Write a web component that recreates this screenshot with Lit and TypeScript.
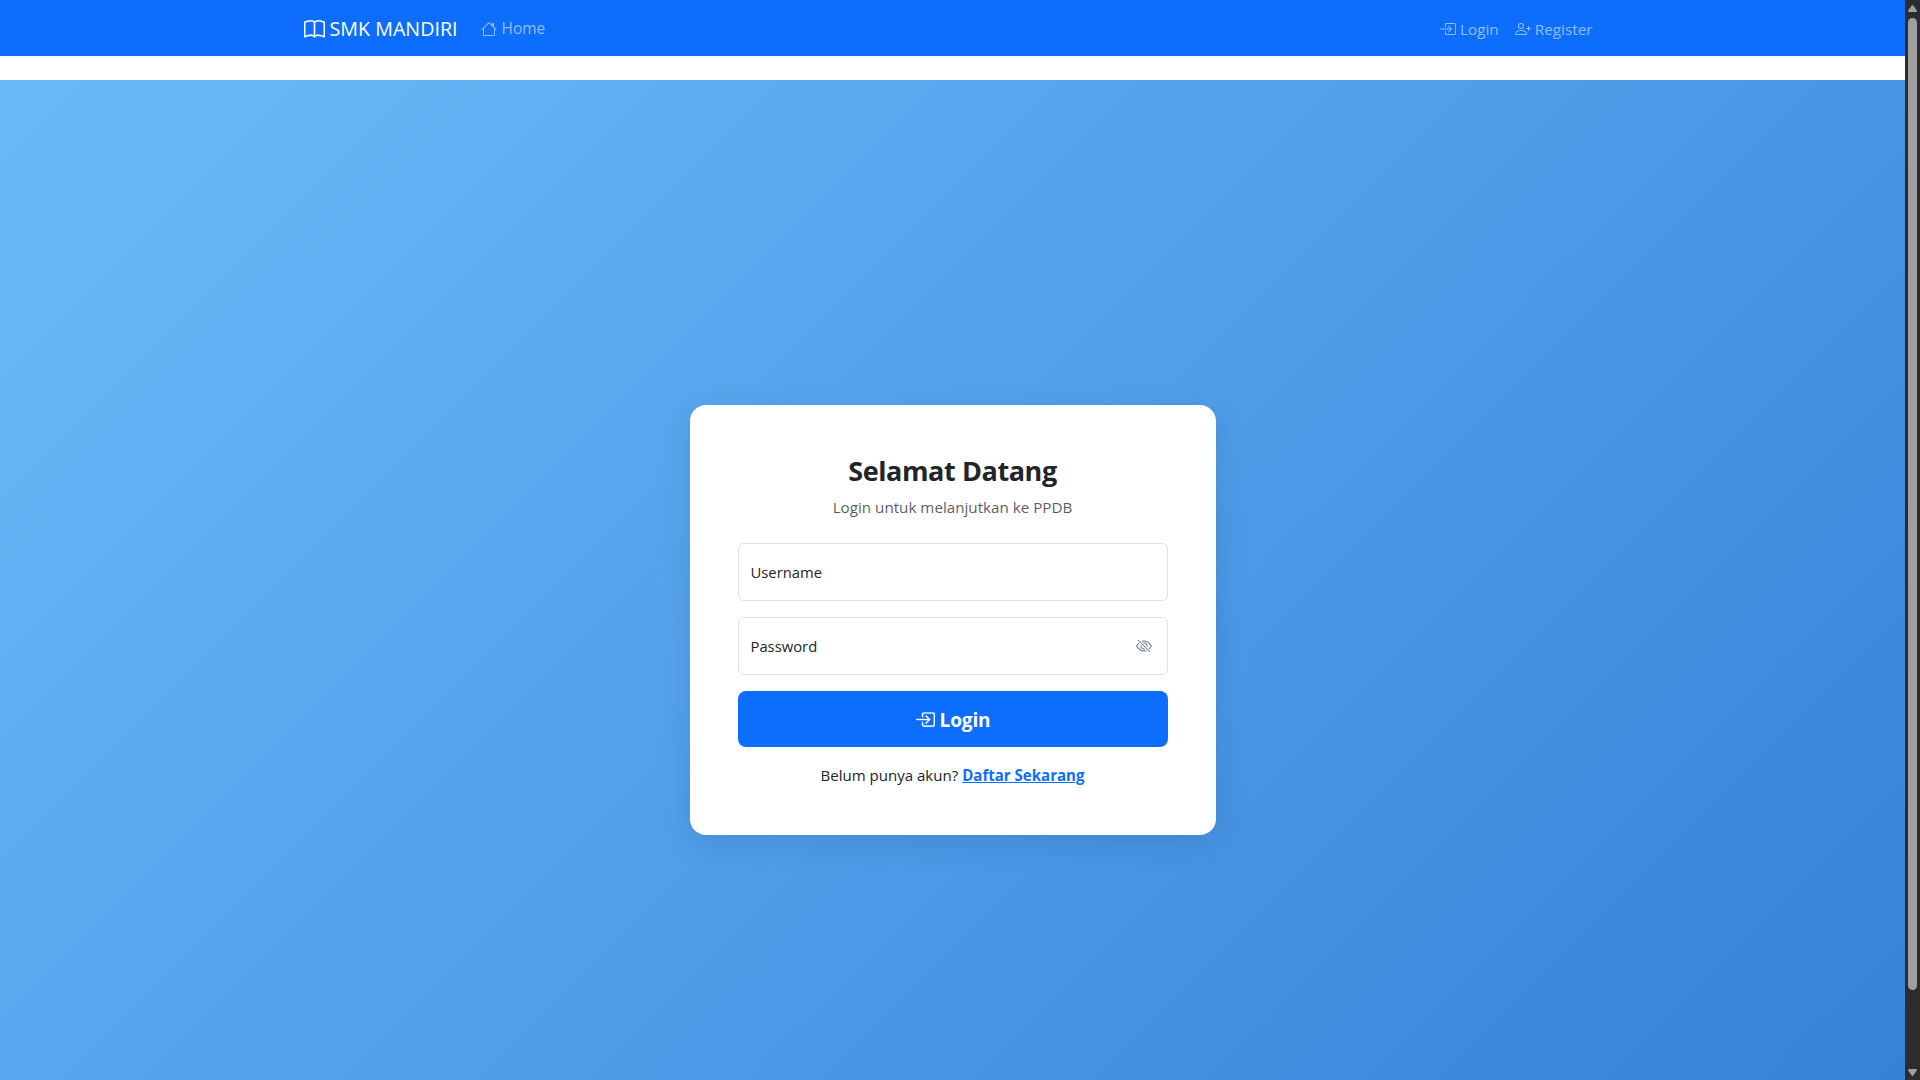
import { LitElement, html, css, svg } from "lit";
import { customElement } from "lit/decorators.js";

const paths = {
  book: svg`<path d="M1 2.828c.885-.37 2.154-.769 3.388-.893 1.33-.134 2.458.063 3.112.752v9.746c-.935-.53-2.12-.603-3.213-.493-1.18.12-2.37.461-3.287.811V2.828zm7.5-.141c.654-.689 1.782-.886 3.112-.752 1.234.124 2.503.523 3.388.893v9.923c-.918-.35-2.107-.692-3.287-.81-1.094-.111-2.278-.039-3.213.492V2.687zM8 1.783C7.015.936 5.587.81 4.287.94c-1.514.153-3.042.672-3.994 1.105A.5.5 0 0 0 0 2.5v11a.5.5 0 0 0 .707.455c.882-.4 2.303-.881 3.68-1.02 1.409-.142 2.59.087 3.223.877a.5.5 0 0 0 .78 0c.633-.79 1.814-1.019 3.222-.877 1.378.139 2.8.62 3.681 1.02A.5.5 0 0 0 16 13.5v-11a.5.5 0 0 0-.293-.455c-.952-.433-2.48-.952-3.994-1.105C10.413.809 8.985.936 8 1.783z"/>`,
  house: svg`<path d="M8.707 1.5a1 1 0 0 0-1.414 0L.646 8.146a.5.5 0 0 0 .708.708L2 8.207V13.5A1.5 1.5 0 0 0 3.5 15h9a1.5 1.5 0 0 0 1.5-1.5V8.207l.646.647a.5.5 0 0 0 .708-.708L13 5.793V2.5a.5.5 0 0 0-.5-.5h-1a.5.5 0 0 0-.5.5v1.293L8.707 1.5ZM13 7.207V13.5a.5.5 0 0 1-.5.5h-9a.5.5 0 0 1-.5-.5V7.207l5-5 5 5Z"/>`,
  login: svg`<path fill-rule="evenodd" d="M6 3.5a.5.5 0 0 1 .5-.5h8a.5.5 0 0 1 .5.5v9a.5.5 0 0 1-.5.5h-8a.5.5 0 0 1-.5-.5v-2a.5.5 0 0 0-1 0v2A1.5 1.5 0 0 0 6.5 14h8a1.5 1.5 0 0 0 1.5-1.5v-9A1.5 1.5 0 0 0 14.5 2h-8A1.5 1.5 0 0 0 5 3.5v2a.5.5 0 0 0 1 0v-2z"/><path fill-rule="evenodd" d="M11.854 8.354a.5.5 0 0 0 0-.708l-3-3a.5.5 0 1 0-.708.708L10.293 7.5H.5a.5.5 0 0 0 0 1h9.793l-2.147 2.146a.5.5 0 0 0 .708.708l3-3z"/>`,
  register: svg`<path d="M6 8a3 3 0 1 0 0-6 3 3 0 0 0 0 6zm2-3a2 2 0 1 1-4 0 2 2 0 0 1 4 0zm4 8c0 1-1 1-1 1H1s-1 0-1-1 1-4 6-4 6 3 6 4zm-1-.004c-.001-.246-.154-.986-.832-1.664C9.516 10.68 8.289 10 6 10c-2.29 0-3.516.68-4.168 1.332-.678.678-.83 1.418-.832 1.664h10z"/><path fill-rule="evenodd" d="M13.5 5a.5.5 0 0 1 .5.5V7h1.5a.5.5 0 0 1 0 1H14v1.5a.5.5 0 0 1-1 0V8h-1.5a.5.5 0 0 1 0-1H13V5.5a.5.5 0 0 1 .5-.5z"/>`,
  eyeSlash: svg`<path d="M13.359 11.238C15.06 9.72 16 8 16 8s-3-5.500-8-5.500a7.028 7.028 0 0 0-2.790.588l.770.771A5.944 5.944 0 0 1 8 3.500c2.120 0 3.879 1.168 5.168 2.457A13.134 13.134 0 0 1 14.828 8c-.058.087-.122.183-.195.288-.335.480-.830 1.120-1.465 1.755-.165.165-.337.328-.517.486l.708.709z"/><path d="M11.297 9.176a3.500 3.500 0 0 0-4.474-4.474l.823.823a2.500 2.500 0 0 1 2.829 2.829l.822.822zm-2.943 1.299.822.822a3.500 3.500 0 0 1-4.474-4.474l.823.823a2.500 2.500 0 0 0 2.829 2.829z"/><path d="M3.350 5.470c-.180.160-.353.322-.518.487A13.134 13.134 0 0 0 1.172 8l.195.288c.335.480.830 1.120 1.465 1.755C4.121 11.332 5.881 12.500 8 12.500c.716 0 1.390-.133 2.020-.360l.770.772A7.029 7.029 0 0 1 8 13.500C3 13.500 0 8 0 8s.939-1.721 2.641-3.238l.708.709zm10.296 8.884-12-12 .708-.708 12 12-.708.708z"/>`,
};

const icon = (name: keyof typeof paths) =>
  html`<svg class="icon" viewBox="0 0 16 16" fill="currentColor" aria-hidden="true">${paths[name]}</svg>`;

@customElement("app-root")
export class AppRoot extends LitElement {
  static styles = css`
    :host {
      display: grid;
      grid-template-columns: 1fr 15px;
      height: 1080px;
      overflow: hidden;
      font: 15px/24px "Segoe UI", "Open Sans", "Noto Sans", sans-serif;
      color: #212529;
      background: #fff;
    }
    * { box-sizing: border-box; }
    a { color: inherit; text-decoration: none; }
    .icon { display: block; width: 16px; height: 16px; flex: none; }
    .page { display: flex; flex-direction: column; height: 1080px; overflow: hidden; }
    .navbar { height: 56px; flex: none; background: #0d6efd; }
    .container {
      display: flex;
      align-items: center;
      width: 1320px;
      height: 56px;
      margin: 0 auto;
      padding: 1px 12px 0;
    }
    .brand { display: flex; align-items: center; gap: 5px; color: #fff; font-size: 19.7px; line-height: 30px; margin: 0 23px 0 -1px; }
    .brand .icon { width: 21px; height: 21px; margin-top: 1px; stroke: currentColor; stroke-width: 0.25px; }
    .brand span, .link span { padding-top: 1px; }
    .link { display: flex; align-items: center; gap: 5px; color: rgba(255, 255, 255, 0.55); font-size: 15.4px; }
    .right { display: flex; gap: 16px; margin-left: auto; padding-right: 8px; }
    .right .link { gap: 4px; font-size: 15.3px; }
    .hero {
      flex: none;
      display: flex;
      align-items: center;
      justify-content: center;
      height: 1080px;
      margin-top: 24px;
      background: linear-gradient(135deg, #6cb9f9 0%, #509de9 50%, #3380d7 100%);
    }
    .card {
      width: 526px;
      height: 430px;
      padding: 48px;
      border-radius: 16px;
      background: #fff;
      box-shadow: 0 8px 32px rgba(0, 0, 0, 0.1);
      text-align: center;
    }
    .title { margin: 0; padding-top: 1px; font-size: 27px; font-weight: 700; line-height: 34px; letter-spacing: -0.4px; }
    .sub { margin: 7px 0 24px; font-size: 15.2px; line-height: 24px; color: rgba(33, 37, 41, 0.75); }
    .field {
      display: flex;
      align-items: center;
      justify-content: space-between;
      height: 58px;
      margin-bottom: 16px;
      padding: 0 14.5px 0 12px;
      border: 1px solid #dee2e6;
      border-radius: 6px;
      font-size: 14.8px;
    }
    .field .icon { color: #6c757d; }
    .submit {
      display: flex;
      align-items: center;
      justify-content: center;
      gap: 5px;
      width: 100%;
      height: 56px;
      padding: 0 0 0 1px;
      border: 0;
      border-radius: 8px;
      background: #0d6efd;
      color: #fff;
      font: inherit;
      font-size: 19px;
      font-weight: 700;
      letter-spacing: -0.15px;
    }
    .submit span { padding-top: 2px; }
    .submit .icon { width: 19px; height: 19px; stroke: currentColor; stroke-width: 0.3px; }
    .foot { margin: 16px 0 0; font-size: 15.05px; }
    .foot a { color: #0d6efd; font-weight: 700; text-decoration: underline; }
    .scroll {
      display: flex;
      flex-direction: column;
      align-items: center;
      height: 1080px;
      padding: 5px 0 4px;
      background: #2c2c2c;
      color: #9f9f9f;
    }
    .scroll svg { display: block; width: 9px; height: 7px; fill: currentColor; }
    .thumb { width: 9px; height: 972px; margin-top: 6px; border-radius: 5px; background: #9f9f9f; }
    .down { margin-top: auto; }
  `;

  render() {
    return html`
      <div class="page">
        <nav class="navbar">
          <div class="container">
            <a class="brand">${icon("book")}<span>SMK MANDIRI</span></a>
            <a class="link">${icon("house")}<span>Home</span></a>
            <div class="right">
              <a class="link">${icon("login")}<span>Login</span></a>
              <a class="link">${icon("register")}<span>Register</span></a>
            </div>
          </div>
        </nav>
        <main class="hero">
          <section class="card">
            <h1 class="title">Selamat Datang</h1>
            <p class="sub">Login untuk melanjutkan ke PPDB</p>
            <div class="field"><span>Username</span></div>
            <div class="field"><span>Password</span>${icon("eyeSlash")}</div>
            <button class="submit">${icon("login")}<span>Login</span></button>
            <p class="foot"><span>Belum punya akun?</span> <a>Daftar Sekarang</a></p>
          </section>
        </main>
      </div>
      <div class="scroll">
        <svg viewBox="0 0 9 7"><path d="M3.700.6Q4.500-.4 5.300.6L8.800 5.500Q9.200 7 8 7H1Q-.2 7 .2 5.500Z"/></svg>
        <div class="thumb"></div>
        <svg class="down" viewBox="0 0 9 7"><path d="M3.700 6.400Q4.500 7.400 5.300 6.400L8.800 1.500Q9.200 0 8 0H1Q-.2 0 .2 1.500Z"/></svg>
      </div>
    `;
  }
}
